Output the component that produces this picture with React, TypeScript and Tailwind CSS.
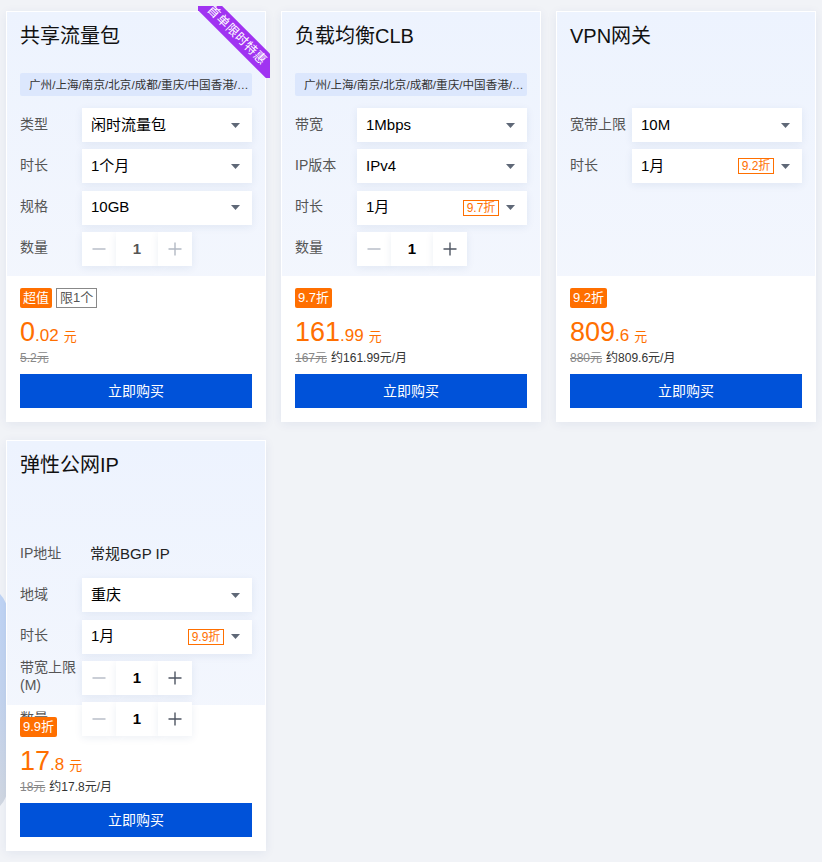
import type { ReactNode } from 'react';

type Row =
  | { kind: 'select'; label: ReactNode; value: string; tag?: string }
  | { kind: 'stepper'; label: ReactNode; disabled?: boolean }
  | { kind: 'text'; label: ReactNode; value: string };

type Product = {
  title: string;
  region?: string;
  ribbon?: boolean;
  rows: Row[];
  badges: { text: string; outline?: boolean }[];
  price: [string, string];
  original: string;
  monthly?: string;
};

const REGION = '广州/上海/南京/北京/成都/重庆/中国香港/新加坡/硅谷/法兰克福';

const products: Product[] = [
  {
    title: '共享流量包',
    region: REGION,
    ribbon: true,
    rows: [
      { kind: 'select', label: '类型', value: '闲时流量包' },
      { kind: 'select', label: '时长', value: '1个月' },
      { kind: 'select', label: '规格', value: '10GB' },
      { kind: 'stepper', label: '数量', disabled: true },
    ],
    badges: [{ text: '超值' }, { text: '限1个', outline: true }],
    price: ['0', '.02'],
    original: '5.2元',
  },
  {
    title: '负载均衡CLB',
    region: REGION,
    rows: [
      { kind: 'select', label: '带宽', value: '1Mbps' },
      { kind: 'select', label: 'IP版本', value: 'IPv4' },
      { kind: 'select', label: '时长', value: '1月', tag: '9.7折' },
      { kind: 'stepper', label: '数量' },
    ],
    badges: [{ text: '9.7折' }],
    price: ['161', '.99'],
    original: '167元',
    monthly: '约161.99元/月',
  },
  {
    title: 'VPN网关',
    rows: [
      { kind: 'select', label: '宽带上限', value: '10M' },
      { kind: 'select', label: '时长', value: '1月', tag: '9.2折' },
    ],
    badges: [{ text: '9.2折' }],
    price: ['809', '.6'],
    original: '880元',
    monthly: '约809.6元/月',
  },
  {
    title: '弹性公网IP',
    rows: [
      { kind: 'text', label: 'IP地址', value: '常规BGP IP' },
      { kind: 'select', label: '地域', value: '重庆' },
      { kind: 'select', label: '时长', value: '1月', tag: '9.9折' },
      {
        kind: 'stepper',
        label: (
          <>
            带宽上限
            <br />
            (M)
          </>
        ),
      },
      { kind: 'stepper', label: '数量' },
    ],
    badges: [{ text: '9.9折' }],
    price: ['17', '.8'],
    original: '18元',
    monthly: '约17.8元/月',
  },
];

const boxShadow = 'shadow-[0_2px_8px_rgba(30,60,130,0.08)]';

function Caret() {
  return (
    <svg width="9" height="5" viewBox="0 0 9 5" className="shrink-0">
      <path d="M0 0h9L4.5 5z" fill="#5f6877" />
    </svg>
  );
}

function Stepper({ disabled }: { disabled?: boolean }) {
  const plusColor = disabled ? '#b3b9c4' : '#4f5663';
  return (
    <div className="flex h-[34px]">
      <div className={`flex w-[34px] items-center justify-center bg-white ${boxShadow}`}>
        <svg width="16" height="16" viewBox="0 0 16 16">
          <path d="M1.5 8h13" stroke="#b3b9c4" strokeWidth="1.4" />
        </svg>
      </div>
      <div
        className={`flex w-[42px] items-center justify-center bg-white text-[15px] font-bold ${boxShadow} ${
          disabled ? 'text-[#555]' : 'text-black'
        }`}
      >
        1
      </div>
      <div className={`flex w-[34px] items-center justify-center bg-white ${boxShadow}`}>
        <svg width="16" height="16" viewBox="0 0 16 16">
          <path d="M1.5 8h13M8 1.5v13" stroke={plusColor} strokeWidth="1.4" />
        </svg>
      </div>
    </div>
  );
}

function FormRow({ row }: { row: Row }) {
  return (
    <div className="flex h-[34px] items-center">
      <div className="w-[62px] shrink-0 pb-[3px] text-[14px] leading-[18px] text-[#555]">{row.label}</div>
      {row.kind === 'select' && (
        <div className={`flex h-[34px] w-[170px] items-center bg-white pl-[9px] pr-[12px] ${boxShadow}`}>
          <span className="flex-1 text-[15px] text-black">{row.value}</span>
          {row.tag && (
            <span className="mr-[7px] flex h-[16px] w-[36px] items-center justify-center border border-[#ff6f00] text-[12px] leading-none text-[#ff6f00]">
              {row.tag}
            </span>
          )}
          <Caret />
        </div>
      )}
      {row.kind === 'stepper' && <Stepper disabled={row.disabled} />}
      {row.kind === 'text' && <div className="pl-[8px] text-[15px] text-[#222]">{row.value}</div>}
    </div>
  );
}

function Ribbon() {
  return (
    <div className="absolute -right-[5px] -top-[6px] z-30 h-[72px] w-[72px] overflow-hidden">
      <div className="absolute left-[-17px] top-[19px] flex h-[20px] w-[112px] rotate-45 items-center justify-center bg-[#a033f1] text-[12.5px] leading-none tracking-[0.5px] text-white">
        首单限时特惠
      </div>
    </div>
  );
}

function Card({ p }: { p: Product }) {
  return (
    <div className="relative h-[411px] w-[260px] border border-white bg-gradient-to-b from-[#edf3fe] to-[#f6f8fd] shadow-[0_2px_10px_rgba(30,60,130,0.07)]">
      {p.ribbon && <Ribbon />}
      <div className="absolute bottom-0 left-0 right-0 h-[145px] bg-white" />
      <div className="relative z-10 px-[13px] pt-[10px]">
        <div className="h-[28px] text-[20px] leading-[28px] text-[#111]">{p.title}</div>
        <div className="mt-[23px] h-[23px]">
          {p.region && (
            <div className="overflow-hidden text-ellipsis whitespace-nowrap rounded-[2px] bg-[#dce7fd] pl-[9px] pr-[2px] text-[11.6px] leading-[23px] text-[#333]">
              {p.region}
            </div>
          )}
        </div>
        <div className="mt-[12px] flex flex-col gap-[7.3px]">
          {p.rows.map((r, i) => (
            <FormRow key={i} row={r} />
          ))}
        </div>
      </div>
      <div className="absolute bottom-0 left-0 right-0 z-20 h-[145px] px-[13px] pb-[13px] pt-[12px]">
        <div className="flex h-[20px] gap-[4px]">
          {p.badges.map((b) =>
            b.outline ? (
              <span
                key={b.text}
                className="flex h-[20px] items-center border border-[#888] bg-white px-[3px] text-[13px] text-[#555]"
              >
                {b.text}
              </span>
            ) : (
              <span
                key={b.text}
                className="flex h-[20px] items-center rounded-[2px] bg-[#ff6f00] px-[3px] text-[13px] text-white"
              >
                {b.text}
              </span>
            )
          )}
        </div>
        <div className="mt-[9px] flex h-[30px] items-baseline leading-[30px] text-[#ff6f00]">
          <span className="text-[27px]">{p.price[0]}</span>
          <span className="text-[17px]">{p.price[1]}</span>
          <span className="ml-[5px] text-[13px]">元</span>
        </div>
        <div className="mt-[3px] flex h-[16px] items-center gap-[4px] text-[12px] leading-[16px]">
          <span className="text-[#888] line-through">{p.original}</span>
          {p.monthly && <span className="text-[#333]">{p.monthly}</span>}
        </div>
        <button className="mt-[8px] flex h-[34px] w-full items-center justify-center bg-[#0052d9] text-[14px] text-white">
          立即购买
        </button>
      </div>
    </div>
  );
}

export default function App() {
  return (
    <div
      className="relative min-h-[862px] w-[822px] overflow-hidden bg-[#f1f3f7] pl-[6px] pt-[11px]"
      style={{ fontFamily: '"Liberation Sans", "Noto Sans CJK SC", sans-serif' }}
    >
      <div className="absolute left-[-50px] top-[585px] h-[230px] w-[58px] rounded-full bg-gradient-to-b from-[#bfd4f5] via-[#c4d4ee] to-[#d3d8e0]" />
      <div className="relative grid grid-cols-[260px_260px_260px] gap-x-[15px] gap-y-[18px]">
        {products.map((p) => (
          <Card key={p.title} p={p} />
        ))}
      </div>
    </div>
  );
}
